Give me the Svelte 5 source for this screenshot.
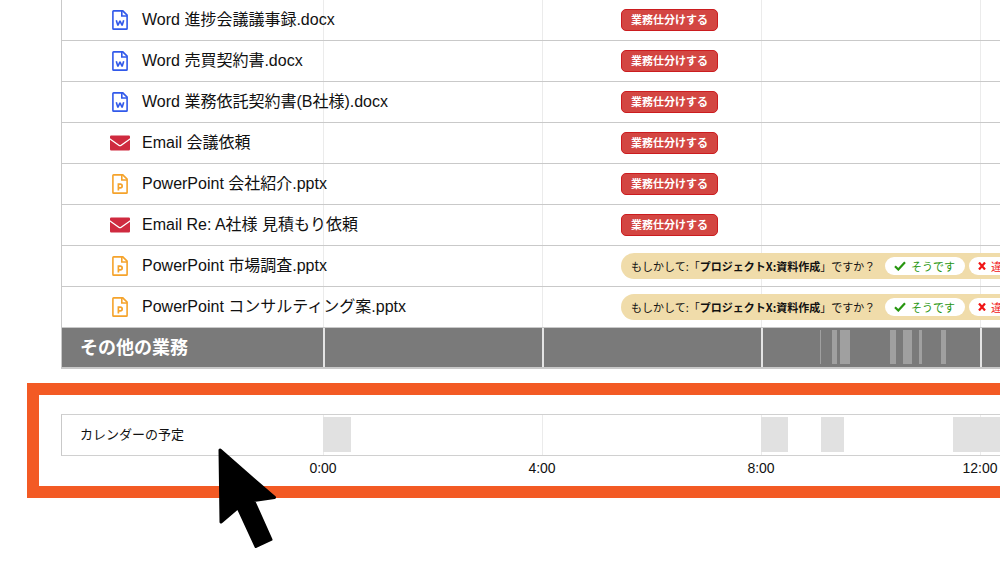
<script>
  const tasks = [
    { kind: 'word', name: 'Word 進捗会議議事録.docx' },
    { kind: 'word', name: 'Word 売買契約書.docx' },
    { kind: 'word', name: 'Word 業務依託契約書(B社様).docx' },
    { kind: 'mail', name: 'Email 会議依頼' },
    { kind: 'slide', name: 'PowerPoint 会社紹介.pptx' },
    { kind: 'mail', name: 'Email Re: A社様 見積もり依頼' },
    { kind: 'slide', name: 'PowerPoint 市場調査.pptx', guess: 'プロジェクトX:資料作成' },
    { kind: 'slide', name: 'PowerPoint コンサルティング案.pptx', guess: 'プロジェクトX:資料作成' }
  ];

  // Start and length of each block, in hours.
  const other = [
    [9.08, 0.02], [9.29, 0.1], [9.44, 0.18], [10.36, 0.1],
    [10.59, 0.17], [10.89, 0.05], [11.28, 0.09]
  ];
  const events = [[0, 0.51], [8, 0.5], [9.09, 0.42], [11.5, 1.5]];
  const hours = ['0:00', '4:00', '8:00', '12:00', '16:00', '20:00'];
</script>

{#snippet icon(kind)}
  {#if kind === 'mail'}
    <svg class="icon" viewBox="0 0 20 16" width="20" height="16" aria-hidden="true">
      <path fill="#cf2a3f" d="M1.500 .5h17A1.300 1.300 0 0 1 20 1.800v1.500L10.800 9.700Q10 10.200 9.200 9.700L0 3.300v-1.500A1.300 1.300 0 0 1 1.500 .5Z" />
      <path fill="#cf2a3f" d="M0 4.700 8.400 10.700Q10 11.700 11.600 10.700L20 4.700v9.500A1.300 1.300 0 0 1 18.500 15.500h-17A1.300 1.300 0 0 1 0 14.200Z" />
    </svg>
  {:else}
    <svg class="icon {kind}" viewBox="0 0 16 20" width="16" height="20" aria-hidden="true">
      <g fill="none" stroke="currentColor" stroke-width="1.600" stroke-linejoin="miter">
        <path d="M2 .9H10.800L15.100 5.200V18.400Q15.100 19.100 14.400 19.100H1.600Q.9 19.100 .9 18.400V1.600Q.9 .9 1.600 .9Z" />
        <path d="M9.800 1V6H15" />
        {#if kind === 'word'}
          <path d="M4.300 10.300 5.900 15.400 8 10.800 10.100 15.400 11.700 10.300" stroke-linejoin="bevel" />
        {:else}
          <path d="M6.400 16.500V10.200H8.300A1.850 1.850 0 0 1 8.300 13.900H6.400" stroke-width="1.700" />
        {/if}
      </g>
    </svg>
  {/if}
{/snippet}

{#snippet blocks(list)}
  {#each list as [start, length]}
    <span class="block" style="--start: {start}; --length: {length}"></span>
  {/each}
{/snippet}

<main>
  <table class="tasks">
    <tbody>
      {#each tasks as task}
        <tr>
          <th scope="row">
            <div class="name">
              <span class="slot">{@render icon(task.kind)}</span>
              {task.name}
            </div>
          </th>
          <td>
            {#if task.guess}
              <div class="guess">
                <span class="question">もしかして:「<b>{task.guess}</b>」ですか？</span>
                <button class="answer yes" type="button">
                  <svg viewBox="0 0 12 10" width="12" height="10" aria-hidden="true">
                    <path d="M1 5.300 4.300 8.500 11 1.300" fill="none" stroke="currentColor" stroke-width="2.200" />
                  </svg>
                  そうです
                </button>
                <button class="answer no" type="button">
                  <svg viewBox="0 0 8 8" width="8" height="8" aria-hidden="true">
                    <path d="M1 .5 7 7.500M7 .5 1 7.500" fill="none" stroke="currentColor" stroke-width="2.200" />
                  </svg>
                  違います
                </button>
              </div>
            {:else}
              <button class="sort" type="button">業務仕分けする</button>
            {/if}
          </td>
        </tr>
      {/each}
      <tr class="other">
        <th scope="row">その他の業務</th>
        <td>{@render blocks(other)}</td>
      </tr>
    </tbody>
  </table>

  <section class="focus">
    <table class="calendar">
      <tbody>
        <tr>
          <th scope="row">カレンダーの予定</th>
          <td>{@render blocks(events)}</td>
        </tr>
      </tbody>
    </table>
    <div class="axis">
      {#each hours as hour}
        <span>{hour}</span>
      {/each}
    </div>
    <svg class="pointer" viewBox="0 0 60 104" width="60" height="104" aria-hidden="true">
      <path d="M3 3 57.500 50.500 36.500 53.500 54 92.500 39 99.500 21 60.500 4 75Z" stroke="#000" stroke-width="3" stroke-linejoin="round" />
    </svg>
  </section>
</main>

<style>
  :global(body) {
    background: #fff;
  }

  main {
    --label: 262px;
    --step: 219px;
    --hour: calc(var(--step) / 4);
    --line: #ebebeb;
    --line-width: 1px;
    overflow: hidden;
    padding-bottom: 66px;
    color: #111;
    font-family: 'Liberation Sans', 'Noto Sans CJK JP', sans-serif;
  }

  table {
    width: calc(var(--label) + var(--step) * 6);
    table-layout: fixed;
    border-collapse: separate;
    border-spacing: 0;
  }

  .tasks {
    margin-left: 61px;
  }

  th,
  td {
    box-sizing: border-box;
    height: 41px;
    padding: 0;
    border-bottom: 1px solid #c9c9c9;
    white-space: nowrap;
  }

  th {
    width: var(--label);
    border-left: 1px solid #c9c9c9;
    font-weight: 400;
    text-align: left;
  }

  td {
    position: relative;
    background: repeating-linear-gradient(
      to right,
      var(--line) 0 var(--line-width),
      transparent var(--line-width) var(--step)
    );
  }

  .tasks td {
    padding-left: 298px;
  }

  .name {
    position: relative;
    z-index: 1;
    display: flex;
    align-items: center;
    width: 0;
    padding-left: 48px;
    font-size: 16px;
    line-height: 24px;
  }

  .slot {
    display: flex;
    flex: none;
    justify-content: center;
    width: 20px;
    margin-right: 12px;
  }

  .word {
    color: #3159ea;
  }

  .slide {
    color: #f5a32b;
  }

  button {
    font: inherit;
    cursor: pointer;
  }

  .sort {
    display: block;
    height: 22px;
    padding: 0 9px;
    border: 1px solid #cb1c1f;
    border-radius: 5px;
    background: #d34642;
    color: #fff;
    font-size: 11px;
    font-weight: 700;
    line-height: 20px;
  }

  .guess {
    display: inline-flex;
    align-items: center;
    gap: 4px;
    height: 26px;
    padding: 0 8px 0 10px;
    border-radius: 13px;
    background: #f0dcaa;
    font-family: 'Noto Sans CJK JP', sans-serif;
    font-size: 11px;
    line-height: 20px;
    vertical-align: middle;
  }

  .question {
    min-width: 250px;
  }

  .answer {
    display: flex;
    align-items: center;
    gap: 5px;
    height: 18px;
    padding: 0 10px 0 9px;
    border: 0;
    border-radius: 9px;
    background: #fff;
    line-height: 18px;
  }

  .yes {
    color: #27960f;
  }

  .no {
    color: #f01414;
  }

  .other th,
  .other td {
    --line: #e4e4e4;
    --line-width: 2px;
    background-color: #7a7a7a;
    border-bottom: 2px solid #c9c9c9;
  }

  .other th {
    padding-left: 18px;
    color: #fff;
    font-size: 18px;
    font-weight: 700;
    line-height: 26px;
  }

  .block {
    position: absolute;
    top: 2px;
    bottom: 3px;
    left: calc(var(--hour) * var(--start));
    width: calc(var(--hour) * var(--length));
    background: #a0a0a0;
  }

  .focus {
    position: relative;
    margin: 14px 0 0 27px;
    padding: 19px 0 8px 22px;
    border: 12px solid #f35a24;
    border-right: 0;
  }

  .calendar th,
  .calendar td {
    height: 42px;
    border-top: 1px solid #d0d0d0;
    border-bottom-color: #d0d0d0;
  }

  .calendar th {
    padding-left: 18px;
    font-size: 13px;
    line-height: 20px;
  }

  .calendar .block {
    background: #e1e1e1;
  }

  .axis {
    display: flex;
    margin-left: calc(var(--label) - var(--step) / 2);
    padding-top: 2px;
    font-size: 14px;
    line-height: 20px;
  }

  .axis span {
    flex: none;
    width: var(--step);
    text-align: center;
  }

  .pointer {
    position: absolute;
    top: 52px;
    left: 178px;
  }
</style>
